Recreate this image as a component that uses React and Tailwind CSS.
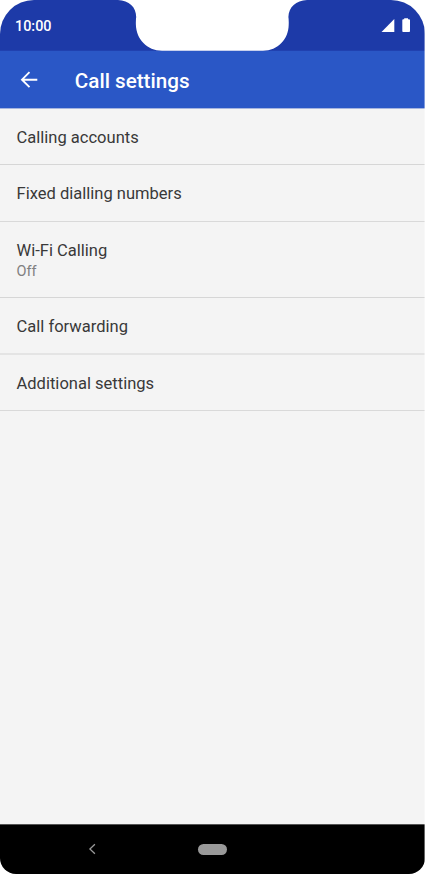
import {useState} from 'react';

const settings = [
  { title: "Calling accounts", size: "h-[57px] pt-[18px]", line: "border-b border-[#d6d6d6]" },
  { title: "Fixed dialling numbers", size: "h-[57px] pt-[17px]", line: "border-b border-[#d9d9d9]" },
  { title: "Wi-Fi Calling", size: "h-[76px] pt-[17px]", line: "border-b border-[#d6d6d6]", status: "Off" },
  { title: "Call forwarding", size: "h-[57px] pt-[17px]", line: "border-b-2 border-[#e4e4e4]" },
  { title: "Additional settings", size: "h-[56px] pt-[17px]", line: "border-b border-[#d9d9d9]" },
]

function StatusBar() {
  return (
    <div className="relative h-[51px] shrink-0 bg-[#1d3aa8] border-b border-[#2041b0] flex justify-between pl-[15px] pr-[14px]">
      {/* camera notch */}
      <svg className="absolute left-0 top-0" width="425" height="51" viewBox="0 0 425 51">
        <path d="M118 0C129 .5 136.200 7 136.200 17Q135.700 20 135.900 25C136.300 39 147 50.700 162 50.700H263C278 50.700 288.500 39 288.700 25Q288.900 20 288.400 17C288.700 7 296 .5 307 0Z" fill="#fff" />
      </svg>
      <span className="mt-[17px] text-[14.400px] leading-5 font-medium text-white">10:00</span>
      <svg className="mt-[17px]" width="30" height="16" viewBox="0 0 30 16" fill="#fff">
        <path d="M.5 15L13.300 2V15Z" />
        <path d="M21.300 3.200Q21.300 2.200 22.200 2.200H23.200V1.200H27V2.200H28Q29 2.200 29 3.200V14.200Q29 15 28 15H22.200Q21.300 15 21.300 14.200Z" />
      </svg>
    </div>
  )
}

function App() {

  const [selected, setselected] = useState("")

  return (
    <div className="w-[425px] h-[874px] bg-white font-[Roboto,sans-serif]">
      <div className="relative w-[425px] h-[874px] flex flex-col overflow-hidden bg-[#f4f4f4] rounded-t-[34px] rounded-b-[16px]">
        <StatusBar />

        <header className="h-[57px] shrink-0 bg-[#2a57c6] flex items-center pl-[20px]">
          <button aria-label="Back" className="w-[18px]">
            <svg width="18" height="18" viewBox="0 0 18 18" fill="none" stroke="#fff" strokeWidth="1.900">
              <path d="M17.300 8.700H2M9.500 1.200L2 8.700L9.500 16.200" />
            </svg>
          </button>
          <h1 className="ml-[36.800px] mt-[2px] text-[20.650px] leading-6 font-medium text-white">Call settings</h1>
        </header>
        <div className="h-px -mb-px shrink-0 bg-[#a6b5df]"></div>

        <main className="flex-1">
          {settings.map(function(item){
            return (
              <div key={item.title} onClick={() => setselected(item.title)} aria-current={selected === item.title} className={"px-[16.500px] text-[#393939] " + item.size + " " + item.line}>
                <p className="text-[16.550px] leading-6">{item.title}</p>
                {item.status && <p className="text-[14.500px] leading-[18px] text-[#808080]">{item.status}</p>}
              </div>
            )
          })}
        </main>

        <nav className="h-[50px] shrink-0 bg-black border-t border-[#555] flex items-center pb-px">
          <svg className="ml-[88px]" width="9" height="12" viewBox="0 0 9 12" fill="none" stroke="#999" strokeWidth="1.300">
            <path d="M6.900 1.200L1.900 6L6.900 10.800" />
          </svg>
          <div className="ml-[101px] w-[29px] h-[11px] rounded-full bg-[#999]"></div>
        </nav>
        {/* soft right edge of the screen */}
        <div className="absolute right-0 inset-y-0 w-px bg-white/40"></div>
      </div>
    </div>
  );
}

export default App;
